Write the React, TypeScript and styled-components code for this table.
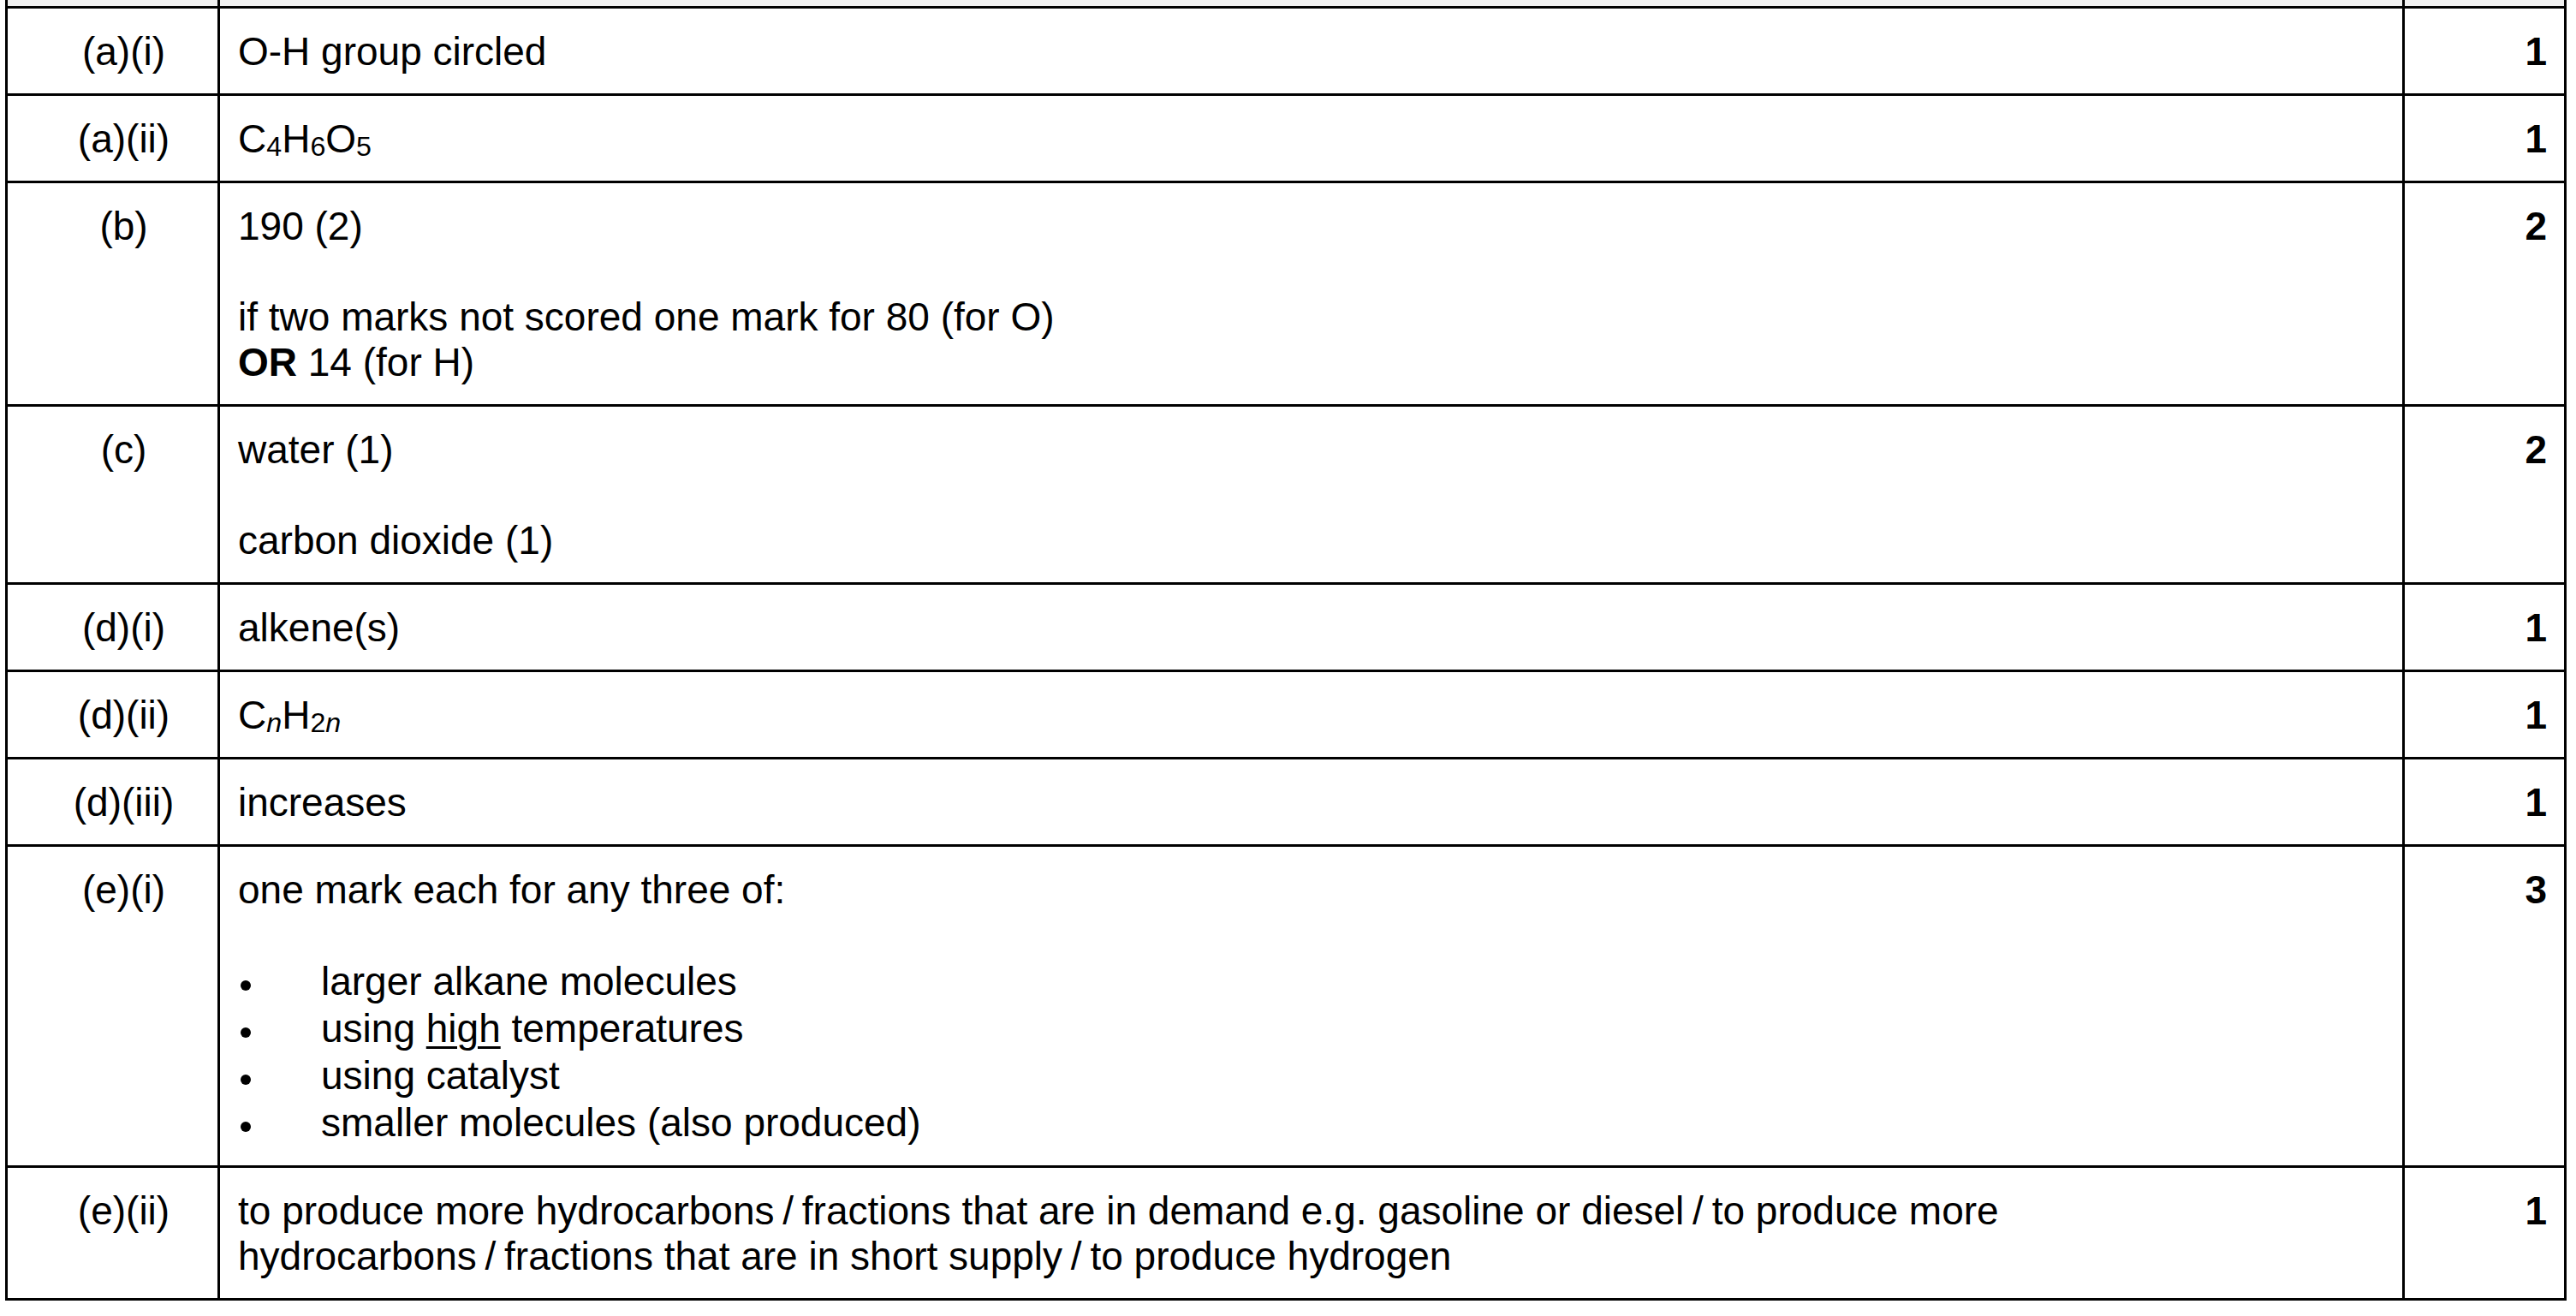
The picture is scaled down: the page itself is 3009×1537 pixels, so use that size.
import React from 'react';
import styled, { createGlobalStyle } from 'styled-components';

const GlobalStyle = createGlobalStyle`
  html, body {
    margin: 0;
    padding: 0;
    background: #ffffff;
  }
  body {
    font-family: "Liberation Sans", Arial, Helvetica, sans-serif;
    color: #000000;
  }
`;

const Page = styled.div`
  padding-left: 6px;
`;

const Table = styled.div`
  display: grid;
  grid-template-columns: 245px 2549px 186px;
  gap: 3px;
  padding: 0 3px 3px;
  background: #000000;
  width: max-content;
`;

const HeadCell = styled.div`
  height: 7px;
  background: #f0f0f0;
`;

const Cell = styled.div<{ $kind: 'part' | 'answer' | 'mark' }>`
  background: #ffffff;
  font-size: 46px;
  line-height: 53px;
  padding: 24px 20px 22px ${(p) => (p.$kind === 'part' ? '46px' : p.$kind === 'answer' ? '21px' : '20px')};
  text-align: ${(p) => (p.$kind === 'part' ? 'center' : p.$kind === 'mark' ? 'right' : 'left')};
  font-weight: ${(p) => (p.$kind === 'mark' ? 700 : 400)};
`;

const Para = styled.div`
  min-height: 53px;
`;

const Sub = styled.sub`
  font-size: 0.7em;
  vertical-align: -0.13em;
  line-height: 0;
`;

const Bold = styled.b`
  font-weight: 700;
`;

const Under = styled.span`
  text-decoration: underline;
  text-decoration-thickness: 3px;
  text-underline-offset: 5px;
`;

// the spaces round a slash are a little tighter than word spaces
const Sep = styled.span`
  word-spacing: -3px;
`;

const Bullets = styled.ul`
  list-style: none;
  margin: 0;
  padding: 0;
`;

const Item = styled.li`
  display: flex;
  align-items: flex-start;
  line-height: 55px;
`;

const Marker = styled.span`
  flex: 0 0 97px;
  height: 55px;
`;

const Dot = styled.span`
  display: block;
  width: 12px;
  height: 12px;
  margin: 26px 0 0 3px;
  border-radius: 50%;
  background: #000000;
`;

type Row = { part: string; mark: number; answer: React.ReactNode };

const bullets: React.ReactNode[] = [
  'larger alkane molecules',
  <>
    using <Under>high</Under> temperatures
  </>,
  'using catalyst',
  'smaller molecules (also produced)',
];

const rows: Row[] = [
  { part: '(a)(i)', mark: 1, answer: <Para>O-H group circled</Para> },
  {
    part: '(a)(ii)',
    mark: 1,
    answer: (
      <Para>
        C<Sub>4</Sub>H<Sub>6</Sub>O<Sub>5</Sub>
      </Para>
    ),
  },
  {
    part: '(b)',
    mark: 2,
    answer: (
      <>
        <Para>190 (2)</Para>
        <Para />
        <Para>if two marks not scored one mark for 80 (for O)</Para>
        <Para>
          <Bold>OR</Bold> 14 (for H)
        </Para>
      </>
    ),
  },
  {
    part: '(c)',
    mark: 2,
    answer: (
      <>
        <Para>water (1)</Para>
        <Para />
        <Para>carbon dioxide (1)</Para>
      </>
    ),
  },
  { part: '(d)(i)', mark: 1, answer: <Para>alkene(s)</Para> },
  {
    part: '(d)(ii)',
    mark: 1,
    answer: (
      <Para>
        C
        <Sub>
          <i>n</i>
        </Sub>
        H
        <Sub>
          2<i>n</i>
        </Sub>
      </Para>
    ),
  },
  { part: '(d)(iii)', mark: 1, answer: <Para>increases</Para> },
  {
    part: '(e)(i)',
    mark: 3,
    answer: (
      <>
        <Para>one mark each for any three of:</Para>
        <Para />
        <Bullets>
          {bullets.map((t, i) => (
            <Item key={i}>
              <Marker>
                <Dot />
              </Marker>
              <span>{t}</span>
            </Item>
          ))}
        </Bullets>
      </>
    ),
  },
  {
    part: '(e)(ii)',
    mark: 1,
    answer: (
      <Para>
        to produce more hydrocarbons<Sep> / </Sep>fractions that are in demand e.g. gasoline or diesel
        <Sep> / </Sep>to produce more
        <br />
        hydrocarbons<Sep> / </Sep>fractions that are in short supply<Sep> / </Sep>to produce hydrogen
      </Para>
    ),
  },
];

const App = () => {
  return (
    <>
      <GlobalStyle />
      <Page>
        <Table>
          <HeadCell />
          <HeadCell />
          <HeadCell />
          {rows.map((r) => (
            <React.Fragment key={r.part}>
              <Cell $kind="part">{r.part}</Cell>
              <Cell $kind="answer">{r.answer}</Cell>
              <Cell $kind="mark">{r.mark}</Cell>
            </React.Fragment>
          ))}
        </Table>
      </Page>
    </>
  );
};

export default App;
